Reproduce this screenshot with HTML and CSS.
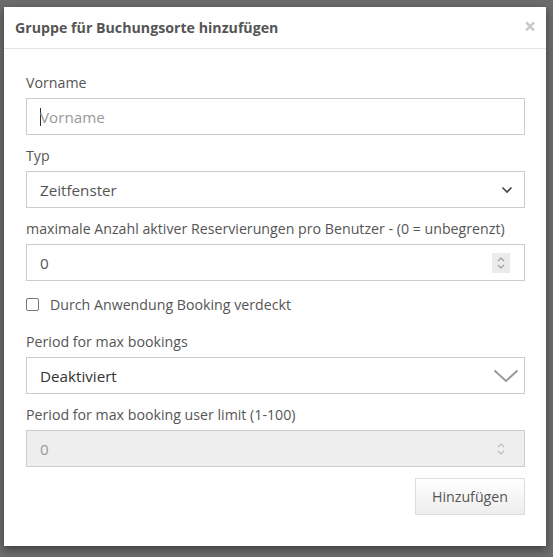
FILE: index.html
```html
<!DOCTYPE html>
<html lang="de">
<head>
<meta charset="utf-8">
<link rel="stylesheet" href="styles.css">
</head>
<body>
<div class="modal">
  <div class="modal-header">
    <span class="title">Gruppe für Buchungsorte hinzufügen</span>
    <span class="close">×</span>
  </div>
  <div class="modal-body">
    <div class="group">
      <div class="label">Vorname</div>
      <div class="field"><span class="caret"></span><span class="placeholder">Vorname</span></div>
    </div>
    <div class="group">
      <div class="label">Typ</div>
      <div class="field"><span class="value">Zeitfenster</span>
        <svg class="chev-small" width="12" height="8" viewBox="0 0 12 8"><path d="M1.5 1.5 L6 6 L10.5 1.5" fill="none" stroke="#444" stroke-width="1.6"/></svg>
      </div>
    </div>
    <div class="group">
      <div class="label">maximale Anzahl aktiver Reservierungen pro Benutzer - (0 = unbegrenzt)</div>
      <div class="field"><span class="value">0</span>
        <span class="spin"><svg width="10" height="14" viewBox="0 0 10 14"><path d="M2 5 L5 2 L8 5 M2 9 L5 12 L8 9" fill="none" stroke="#999" stroke-width="1.1"/></svg></span>
      </div>
    </div>
    <div class="check-row">
      <span class="checkbox"></span>
      <span class="check-label">Durch Anwendung Booking verdeckt</span>
    </div>
    <div class="group">
      <div class="label">Period for max bookings</div>
      <div class="field"><span class="value dark">Deaktiviert</span>
        <svg class="chev-big" width="26" height="14" viewBox="0 0 26 14"><path d="M1.5 1.5 L13 12 L24.5 1.5" fill="none" stroke="#999" stroke-width="2"/></svg>
      </div>
    </div>
    <div class="group">
      <div class="label">Period for max booking user limit (1-100)</div>
      <div class="field disabled"><span class="value muted">0</span>
        <span class="spin plain"><svg width="10" height="14" viewBox="0 0 10 14"><path d="M2 5 L5 2 L8 5 M2 9 L5 12 L8 9" fill="none" stroke="#bbb" stroke-width="1.1"/></svg></span>
      </div>
    </div>
    <div class="actions">
      <button class="btn">Hinzufügen</button>
    </div>
  </div>
</div>
</body>
</html>
```
FILE: styles.css
```css
html, body {
  margin: 0;
  padding: 0;
}
body {
  background: #6c6c6c;
  width: 553px;
  height: 557px;
  overflow: hidden;
  font-family: "Open Sans", "Noto Sans", sans-serif;
  color: #555;
}
.modal {
  margin: 7px 0 0 4px;
  width: 542px;
  height: 539px;
  background: #fff;
  box-shadow: 0 3px 8px rgba(0,0,0,0.45);
  box-sizing: border-box;
}
.modal-header {
  height: 42px;
  border-bottom: 1px solid #e5e5e5;
  display: flex;
  align-items: center;
  justify-content: space-between;
  padding: 0 10px 0 11px;
  box-sizing: border-box;
}
.title {
  font-size: 14.2px;
  font-weight: 700;
  color: #555;
}
.close {
  font-size: 21px;
  font-weight: 700;
  color: #c8c8c8;
  line-height: 1;
  margin-top: -2px;
}
.modal-body {
  padding: 24px 21px 0 22px;
}
.group {
  margin-bottom: 11px;
}
.label {
  font-size: 14.2px;
  line-height: 20px;
  margin-bottom: 5px;
  color: #555;
}
.field {
  height: 37px;
  border: 1px solid #ccc;
  box-sizing: border-box;
  display: flex;
  align-items: center;
  padding: 0 13px 0 13px;
  font-size: 15.2px;
  position: relative;
}
.placeholder {
  color: #999;
}
.caret {
  width: 1px;
  height: 18px;
  background: #333;
  margin-right: -1px;
}
.value {
  flex: 1;
  color: #555;
}
.value.dark {
  color: #333;
}
.value.muted {
  color: #999;
}
.chev-small {
  margin-right: -2px;
}
.chev-big {
  margin-right: -8px;
}
.spin {
  width: 18px;
  height: 20px;
  background: #ebebeb;
  display: flex;
  align-items: center;
  justify-content: center;
  margin-right: 1px;
}
.spin.plain {
  background: transparent;
}
.field.disabled {
  background: #eee;
}
.check-row {
  display: flex;
  align-items: center;
  height: 20px;
  margin: 13px 0 18px;
}
.checkbox {
  width: 13px;
  height: 13px;
  border: 1px solid #777;
  border-radius: 2px;
  box-sizing: border-box;
  margin-right: 11px;
}
.check-label {
  font-size: 14.2px;
  color: #555;
}
.actions {
  display: flex;
  justify-content: flex-end;
  margin-top: 0;
}
.btn {
  height: 37px;
  width: 110px;
  border: 1px solid #ddd;
  background: linear-gradient(#fff, #ededed);
  font-family: "Open Sans", "Noto Sans", sans-serif;
  font-size: 14.2px;
  color: #555;
  padding: 0;
}
```
